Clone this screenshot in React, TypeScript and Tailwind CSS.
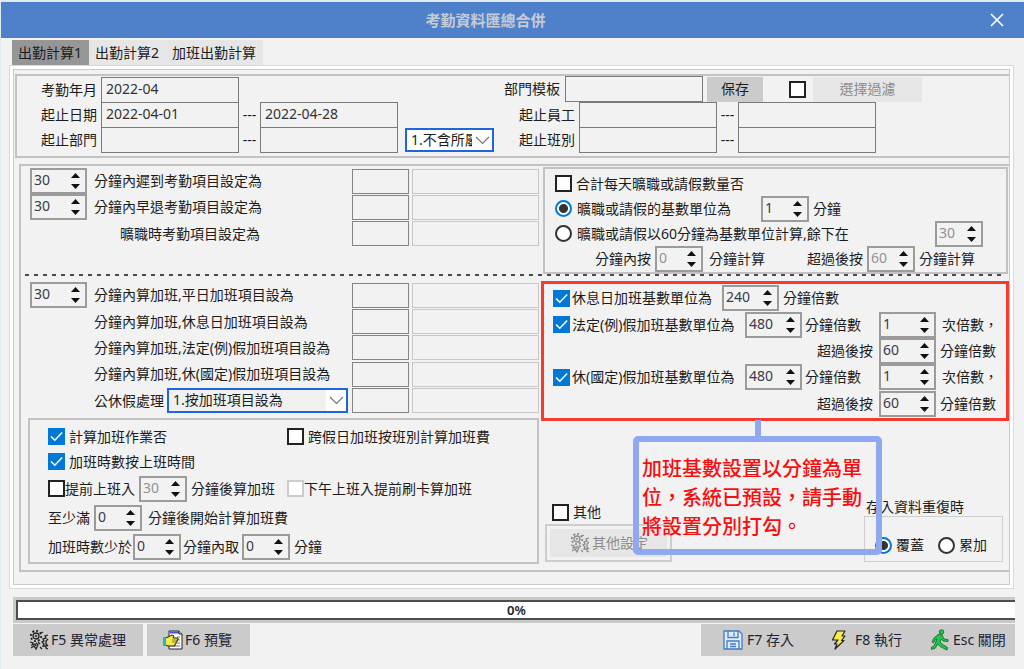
import { useState } from 'react'
import type { ReactNode } from 'react'
import { clsx } from 'clsx'

interface SpinnerProps {
  label: string
  value: number
  className?: string
  muted?: boolean
}

function Spinner({ label, value, className = 'w-12', muted = false }: SpinnerProps) {
  const [current, setCurrent] = useState(String(value))
  const step = (delta: number) => setCurrent(String(Math.max(0, Number(current) + delta)))

  return (
    <span className={clsx('flex h-[26px] shrink-0 border-2 border-[#9b9b9b] bg-[#f2f2f2]', className)}>
      <input
        aria-label={label}
        value={current}
        onChange={(e) => setCurrent(e.target.value)}
        className={clsx('h-5 w-0 min-w-0 flex-1 bg-transparent pl-0.5 outline-none', muted ? 'text-[#929292]' : 'text-[#3a3a48]')}
      />
      <span className="mr-0.5 flex w-4 flex-col items-center justify-center gap-1.5">
        <button type="button" aria-label={`${label} +`} onClick={() => step(1)} className="leading-none">
          <svg width="9" height="5" viewBox="0 0 9 5"><path d="M4.5 0 9 5H0z" fill="#111" /></svg>
        </button>
        <button type="button" aria-label={`${label} -`} onClick={() => step(-1)} className="leading-none">
          <svg width="9" height="5" viewBox="0 0 9 5"><path d="M0 0h9L4.5 5z" fill="#111" /></svg>
        </button>
      </span>
    </span>
  )
}

interface CheckProps {
  children?: ReactNode
  checked?: boolean
  disabled?: boolean
  label?: string
  className?: string
}

function Check({ children, checked = false, disabled = false, label, className = 'gap-1' }: CheckProps) {
  return (
    <label className={clsx('flex shrink-0 items-center', className)}>
      <span className="relative flex">
        <input
          type="checkbox"
          aria-label={label}
          defaultChecked={checked}
          disabled={disabled}
          className="peer size-[17px] appearance-none border-2 border-[#222] bg-white checked:border-[#0078d7] checked:bg-[#0078d7] disabled:border-[#ccc]"
        />
        <svg className="pointer-events-none absolute inset-0 hidden peer-checked:block" width="17" height="17" viewBox="0 0 17 17" fill="none">
          <path d="M3 8.5 6.8 12.3 14.2 4.6" stroke="#fff" strokeWidth="1.5" />
        </svg>
      </span>
      {children && <span>{children}</span>}
    </label>
  )
}

function Radio({ name, children, checked = false, className = 'gap-1.5' }: { name: string; children: ReactNode; checked?: boolean; className?: string }) {
  return (
    <label className={clsx('flex shrink-0 items-center', className)}>
      <input
        type="radio"
        name={name}
        defaultChecked={checked}
        className="size-[17px] appearance-none rounded-full border-2 border-[#333] bg-white checked:border-[#0078d7] checked:bg-[radial-gradient(circle,#333_0_4px,#fff_5px)]"
      />
      <span>{children}</span>
    </label>
  )
}

function Combo({ label, options, className, fill }: { label: string; options: string[]; className: string; fill: string }) {
  return (
    <span className={clsx('relative flex shrink-0 border-2 border-[#1e66dc]', className)}>
      <select aria-label={label} className={clsx('w-full appearance-none pr-5 pb-0.5 pl-1 outline-none', fill)}>
        {options.map((option) => <option key={option}>{option}</option>)}
      </select>
      <span className="pointer-events-none absolute inset-y-0 right-0 flex w-5 items-center justify-center bg-white">
        <svg width="15" height="9" viewBox="0 0 15 9" fill="none"><path d="m1 1 6.5 6.5L14 1" stroke="#777" strokeWidth="1.2" /></svg>
      </span>
    </span>
  )
}

function Field({ label, value, className = 'w-[138px]' }: { label: string; value?: string; className?: string }) {
  return (
    <input
      aria-label={label}
      defaultValue={value}
      className={clsx('h-[26px] shrink-0 border border-[#7a7a7a] bg-[#f2f2f2] px-1 pb-1 text-[#333] outline-none', className)}
    />
  )
}

function RangeFields({ label, from, to }: { label: string; from?: string; to?: string }) {
  return (
    <>
      <Field label={`${label} 起`} value={from} />
      <span className="w-[21px] shrink-0 text-center">---</span>
      <Field label={`${label} 止`} value={to} />
    </>
  )
}

function ItemFields({ label }: { label: string }) {
  return (
    <span className="flex shrink-0 gap-[3px]">
      <input aria-label={`${label} 代碼`} className="h-[25px] w-[57px] border border-[#858585] bg-[#f2f2f2] outline-none" />
      <input aria-label={`${label} 名稱`} readOnly className="h-[25px] w-[127px] border border-[#c8c8c8] bg-[#f2f2f2] outline-none" />
    </span>
  )
}

function ItemRow({ minutes, label, indent }: { minutes?: number; label: string; indent?: boolean }) {
  return (
    <div className="flex items-center">
      <span className="flex w-16 shrink-0">
        {minutes !== undefined && <Spinner label={`${label} 分鐘`} value={minutes} className="w-[57px]" />}
      </span>
      <span className={clsx('flex-1', indent && 'pl-[26px]')}>{label}</span>
      <ItemFields label={label} />
    </div>
  )
}

function GearsIcon({ color = '#222' }: { color?: string }) {
  return (
    <svg width="20" height="20" viewBox="0 0 20 20" fill="none" stroke={color}>
      <circle cx="7" cy="6" r="3" strokeWidth="1.3" />
      <circle cx="7" cy="6" r="5.2" strokeWidth="1.8" strokeDasharray="2 2" />
      <circle cx="7" cy="6" r="0.8" />
      <path d="M1 12l3 1-1 2 3-1 1 2M2 18l3-2 2 3 2-4-2-2M9 12l2 2" strokeWidth="1.3" />
      <path d="M19 5l-3 1 1 2-3 1 1 2-2 1 2 2-1 2 3 0 0 2 2 1M19 9l-2 2 0 3 2 2" strokeWidth="1.3" />
      <path d="M11 17l2 2M12 3l2-1" strokeWidth="1.3" />
    </svg>
  )
}

function PreviewIcon() {
  return (
    <svg width="20" height="20" viewBox="0 0 20 20">
      <path d="M6 1h10l3 3v15H6z" fill="#fff" stroke="#222" />
      <path d="M7 1.5h9v2H7z" fill="#4b50e0" />
      <path d="M16 1v3h3" fill="#ddd" stroke="#222" />
      <path d="M14 7h3M14 10h3M14 13h3M9 16h8" stroke="#777" />
      <path d="M2 8l3-1 4-2 2 1-1 2h5v2h-1v2h-1v2h-1v2H5l-3-1z" fill="#f4ea4a" stroke="#222" />
      <path d="M9 10h5M9 12h4" stroke="#8b8420" />
      <path d="M0 7h3v9H0z" fill="#22b6c4" />
    </svg>
  )
}

function SaveIcon() {
  return (
    <svg width="20" height="20" viewBox="0 0 20 20" fill="none" stroke="#4279c9" strokeWidth="1.3">
      <path d="M1 1h15l3 3v15H1z" fill="#e3ecf9" />
      <path d="M5 1v6.5h10V1M11 2.5v3.5" />
      <path d="M4 19v-8h12v8M7 14h6M7 16.5h6" />
    </svg>
  )
}

function BoltIcon() {
  return (
    <svg width="16" height="20" viewBox="0 0 16 20">
      <path d="M6 1h8l-3 5h3l-3.500 4.500h2.500L4 19l2-5H3.500l3.500-4H1.500z" fill="#f6ee4d" stroke="#222" strokeWidth="1.2" strokeLinejoin="round" />
    </svg>
  )
}

function RunnerIcon() {
  return (
    <svg width="18" height="22" viewBox="0 0 18 22" stroke="#14602b" strokeWidth="0.8" strokeLinejoin="round">
      <circle cx="10.5" cy="3" r="2.300" fill="#20c84a" />
      <path d="M7 5.500l4 .5 2 4 4 .5v2l-5-.5-1.500-2-1.500 3 3.500 3 4 2.500-.5 2.500-6-3-3.500-3-2 4-4 1.500-.5-2 3-1.500 3-7-2 1-1.500 3-1.500-1 2-4z" fill="#20c84a" />
    </svg>
  )
}

function ToolButton({ icon, children, className }: { icon: ReactNode; children: ReactNode; className: string }) {
  return (
    <button type="button" className={clsx('flex h-8 items-center bg-[#cbcbcb] text-[#222233]', className)}>
      {icon}
      <span>{children}</span>
    </button>
  )
}

function TitleBar() {
  return (
    <header className="flex h-9 items-center bg-[#4f81ca]">
      <h1 className="flex-1 text-center text-[15px] font-bold text-[#c5cbd5]">考勤資料匯總合併</h1>
      <button type="button" aria-label="關閉視窗" className="flex w-[54px] justify-center">
        <svg width="14" height="14" viewBox="0 0 14 14"><path d="M1 1l12 12M13 1L1 13" stroke="#fff" strokeWidth="1.6" /></svg>
      </button>
    </header>
  )
}

function FilterPanel() {
  return (
    <section className="flex h-[84px] border-2 border-r-0 border-[#c2c2c2]">
      <div className="flex w-[487px] shrink-0 flex-col pt-px">
        <div className="-mb-px flex items-center">
          <span className="mr-1 w-20 text-right">考勤年月</span>
          <Field label="考勤年月" value="2022-04" />
        </div>
        <div className="-mb-px flex items-center">
          <span className="mr-1 w-20 text-right">起止日期</span>
          <RangeFields label="起止日期" from="2022-04-01" to="2022-04-28" />
        </div>
        <div className="flex items-center">
          <span className="mr-1 w-20 text-right">起止部門</span>
          <RangeFields label="起止部門" />
          <Combo label="部門範圍" options={['1.不含所屬部門', '2.含所屬部門']} className="ml-[7px] h-6 w-[89px]" fill="bg-white" />
        </div>
      </div>
      <div className="flex flex-1 flex-col">
        <div className="flex items-center">
          <span className="mr-1 w-[57px]">部門模板</span>
          <Field label="部門模板" />
          <button type="button" className="ml-1 h-[25px] w-14 bg-[#cbcbcb]">保存</button>
          <span className="ml-[26px] flex w-6">
            <Check label="啟用過濾" />
          </span>
          <button type="button" className="h-[25px] w-[109px] bg-[#e6e6e6] text-[#8c8c8c]">選擇過濾</button>
        </div>
        <div className="-mb-px flex items-center">
          <span className="mr-1 w-[71px] text-right">起止員工</span>
          <RangeFields label="起止員工" />
        </div>
        <div className="flex items-center">
          <span className="mr-1 w-[71px] text-right">起止班別</span>
          <RangeFields label="起止班別" />
        </div>
      </div>
    </section>
  )
}

function AbsencePanel() {
  return (
    <div className="mt-px mr-px flex-1 border-2 border-[#c2c2c2] pt-0.5 pl-2.5">
      <div className="flex h-[25px] items-center">
        <Check>合計每天曠職或請假數量否</Check>
      </div>
      <div className="flex h-[25px] items-center">
        <Radio name="absence" checked className="w-[206px] gap-[5px]">曠職或請假的基數單位為</Radio>
        <Spinner label="曠職基數" value={1} />
        <span className="ml-1">分鐘</span>
      </div>
      <div className="flex h-[25px] items-center">
        <Radio name="absence" className="w-[380px] gap-[5px]">曠職或請假以60分鐘為基數單位計算,餘下在</Radio>
        <Spinner label="餘下分鐘" value={30} muted />
      </div>
      <div className="flex h-[25px] items-center">
        <span className="w-[100px] pl-10">分鐘內按</span>
        <Spinner label="分鐘內按" value={0} muted />
        <span className="ml-1.5 w-[98px]">分鐘計算</span>
        <span className="w-[60px]">超過後按</span>
        <Spinner label="超過後按" value={60} muted />
        <span className="ml-1">分鐘計算</span>
      </div>
    </div>
  )
}

function ExcessRow({ label }: { label: string }) {
  return (
    <div className="flex items-center pl-[264px]">
      <span className="w-[62px]">超過後按</span>
      <Spinner label={`${label} 超過後按`} value={60} className="w-[57px]" />
      <span className="ml-1">分鐘倍數</span>
    </div>
  )
}

function HolidayBaseRow({ label }: { label: string }) {
  return (
    <div className="flex items-center">
      <Check checked className="w-[192px] gap-0.5">{label}</Check>
      <Spinner label={label} value={480} className="w-[57px]" />
      <span className="ml-[3px] w-[74px]">分鐘倍數</span>
      <Spinner label={`${label} 次倍數`} value={1} className="w-[57px]" />
      <span className="ml-1.5">次倍數，</span>
    </div>
  )
}

function OvertimeBasePanel() {
  return (
    <div className="border-[3px] border-[#f8392f] bg-[#f2f2f2] py-px pl-[9px]">
      <div className="grid h-[132px] grid-rows-5 whitespace-nowrap">
        <div className="flex items-center">
          <Check checked className="w-[169px] gap-0.5">休息日加班基數單位為</Check>
          <Spinner label="休息日加班基數" value={240} className="w-[57px]" />
          <span className="ml-1">分鐘倍數</span>
        </div>
        <HolidayBaseRow label="法定(例)假加班基數單位為" />
        <ExcessRow label="法定(例)假" />
        <HolidayBaseRow label="休(國定)假加班基數單位為" />
        <ExcessRow label="休(國定)假" />
      </div>
    </div>
  )
}

function CalculationPanel() {
  return (
    <div className="mt-1 ml-[7px] w-[511px] border-2 border-[#c2c2c2] pt-1 pb-px pl-[18px]">
      <div className="flex h-[25px] items-center">
        <Check checked className="w-[239px] gap-1">計算加班作業否</Check>
        <Check>跨假日加班按班別計算加班費</Check>
      </div>
      <div className="flex h-[25px] items-center">
        <Check checked>加班時數按上班時間</Check>
      </div>
      <div className="flex h-[29px] items-center">
        <Check className="w-[91px] gap-0">提前上班入</Check>
        <Spinner label="提前上班入" value={30} muted />
        <span className="ml-1 w-24">分鐘後算加班</span>
        <Check disabled className="gap-0">下午上班入提前刷卡算加班</Check>
      </div>
      <div className="flex h-[29px] items-center">
        <span className="w-[46px]">至少滿</span>
        <Spinner label="至少滿" value={0} />
        <span className="ml-1.5">分鐘後開始計算加班費</span>
      </div>
      <div className="flex h-[29px] items-center">
        <span className="w-[85px]">加班時數少於</span>
        <Spinner label="加班時數少於" value={0} />
        <span className="ml-0.5 w-[59px]">分鐘內取</span>
        <Spinner label="分鐘內取" value={0} />
        <span className="ml-1">分鐘</span>
      </div>
    </div>
  )
}

function SettingsPanel() {
  return (
    <section className="mt-1.5 ml-1 border-2 border-r-0 border-[#c2c2c2]">
      <div className="flex h-[108px]">
        <div className="w-[522px] shrink-0 pt-0.5 pr-1 pl-[9px]">
          <div className="grid h-[79px] grid-rows-3">
            <ItemRow minutes={30} label="分鐘內遲到考勤項目設定為" />
            <ItemRow minutes={30} label="分鐘內早退考勤項目設定為" />
            <ItemRow label="曠職時考勤項目設定為" indent />
          </div>
        </div>
        <AbsencePanel />
      </div>
      <div className="mx-1 h-0.5 bg-[repeating-linear-gradient(90deg,#4a4a4a_0_4px,transparent_4px_9px)]" />
      <div className="flex pt-[5px]">
        <div className="w-[520px] shrink-0 pb-1.5">
          <div className="grid h-[133px] grid-rows-5 pt-px pr-0.5 pl-[9px]">
            <ItemRow minutes={30} label="分鐘內算加班,平日加班項目設為" />
            <ItemRow label="分鐘內算加班,休息日加班項目設為" />
            <ItemRow label="分鐘內算加班,法定(例)假加班項目設為" />
            <ItemRow label="分鐘內算加班,休(國定)假加班項目設為" />
            <div className="flex items-center">
              <span className="ml-16 w-[73px]">公休假處理</span>
              <Combo label="公休假處理" options={['1.按加班項目設為', '2.按公休項目設為']} className="mr-1 h-[25px] flex-1" fill="bg-[#f0f0f0]" />
              <ItemFields label="公休假處理" />
            </div>
          </div>
          <CalculationPanel />
        </div>
        <div className="relative flex flex-1 flex-col">
          <OvertimeBasePanel />
          <div className="flex flex-1 items-end justify-between pr-1.5 pb-2">
            <div className="ml-1">
              <div className="mb-0.5 ml-[7px] flex">
                <Check className="gap-1">其他</Check>
              </div>
              <div className="border-2 border-[#cdcdcd] p-[3px]">
                <button type="button" className="flex h-7 w-[117px] items-center gap-0.5 bg-[#e6e6e6] pl-5 text-[#8c8c8c]">
                  <GearsIcon color="#8c8c8c" />
                  <span>其他設定</span>
                </button>
              </div>
            </div>
            <div role="radiogroup" aria-labelledby="duplicate-mode">
              <div id="duplicate-mode" className="pl-0.5 leading-[18px]">存入資料重復時</div>
              <div className="flex h-[46px] w-[139px] items-end gap-3.5 border border-[#cfcfcf] pb-1.5 pl-2.5">
                <Radio name="duplicate" checked className="gap-1">覆蓋</Radio>
                <Radio name="duplicate" className="gap-1">累加</Radio>
              </div>
            </div>
          </div>
          <div className="pointer-events-none absolute top-[139px] left-[92px] w-[249px]">
            <div className="mx-auto h-4 w-1.5 bg-[#90a8ef]" />
            <div className="h-[119px] rounded-[5px] border-[6px] border-[#90a8ef] pt-3 pl-[3px] text-xl leading-[29px] font-medium whitespace-normal text-[#fb0d0d]">
              加班基數設置以分鐘為單位，系統已預設，請手動將設置分別打勾。
            </div>
          </div>
        </div>
      </div>
    </section>
  )
}

const tabs = ['出勤計算1', '出勤計算2', '加班出勤計算']

export default function App() {
  const [activeTab, setActiveTab] = useState(tabs[0])

  return (
    <main className="min-h-screen border-t-2 border-l border-[#e0ebf0] bg-[#f2f2f2] font-['Noto_Sans','Noto_Sans_CJK_TC',sans-serif] text-sm leading-5 whitespace-nowrap text-[#1c1c1c]">
      <TitleBar />
      <nav role="tablist" className="flex pt-0.5 pl-[11px]">
        {tabs.map((tab) => (
          <button
            key={tab}
            type="button"
            role="tab"
            aria-selected={tab === activeTab}
            onClick={() => setActiveTab(tab)}
            className={clsx('h-[25px] pr-[7px] pl-1.5', tab === activeTab ? 'bg-[#969696]' : 'bg-[#e6e6e6]')}
          >
            {tab}
          </button>
        ))}
      </nav>
      <div className="mr-2.5 ml-2 border border-[#d9d9d9] bg-white p-[3px]">
        <div className="border border-[#c9c9c9] bg-[#f2f2f2] pt-1 pb-3 pl-px">
          <FilterPanel />
          <SettingsPanel />
        </div>
      </div>
      <div className="mt-2 mr-[9px] ml-3 border-[3px] border-r-0 border-[#c9c9c9]">
        <div role="progressbar" aria-valuenow={0} aria-label="處理進度" className="h-5 border-2 border-r-0 border-[#4d4d4d] bg-white text-center text-[13px] leading-4 font-semibold">
          0%
        </div>
      </div>
      <footer className="mt-px mr-[9px] ml-3 flex">
        <ToolButton icon={<GearsIcon />} className="w-[130px] gap-0.5 pl-4">F5 異常處理</ToolButton>
        <ToolButton icon={<PreviewIcon />} className="ml-1 w-[103px] gap-0.5 pl-4">F6 預覽</ToolButton>
        <div className="ml-auto flex w-[314px] bg-[#cbcbcb]">
          <ToolButton icon={<SaveIcon />} className="w-[129px] gap-1 pl-[22px]">F7 存入</ToolButton>
          <ToolButton icon={<BoltIcon />} className="w-[101px] gap-2 pl-px">F8 執行</ToolButton>
          <ToolButton icon={<RunnerIcon />} className="gap-1">Esc 關閉</ToolButton>
        </div>
      </footer>
    </main>
  )
}
